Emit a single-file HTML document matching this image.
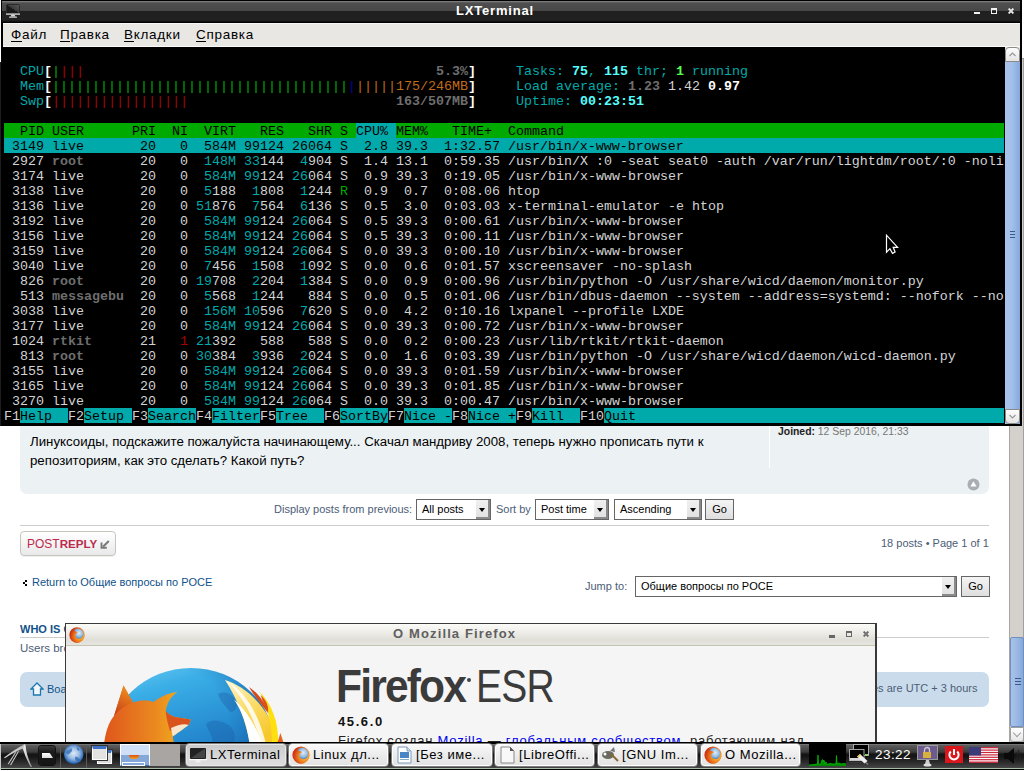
<!DOCTYPE html>
<html><head><meta charset="utf-8">
<style>
*{margin:0;padding:0;box-sizing:border-box}
html,body{width:1024px;height:771px;overflow:hidden;background:#fff;font-family:"Liberation Sans",sans-serif;position:relative}
.abs{position:absolute;white-space:nowrap}
#page{position:absolute;left:0;top:0;width:1009px;height:742px;background:#fff;overflow:hidden}
#ffsb{position:absolute;left:1009px;top:0;width:15px;height:742px;background:#d4d1cc;border-left:1px solid #a9a6a1;border-right:1px solid #a0a0a0}
#ffsb:before{content:"";position:absolute;left:12px;top:0;width:2px;height:58px;background:#fff;border-bottom:1px solid #999}
#ffsb .th{position:absolute;left:0;top:637px;width:14px;height:90px;background:linear-gradient(90deg,#a6c2ea,#9ebbe6 40%,#86a9db);border:1px solid #6f8fbf;border-radius:2px}
#ffsb .th i{position:absolute;left:4px;width:6px;height:1px;background:#3b5a8a}
#ffsb .dn{position:absolute;left:0;top:727px;width:14px;height:15px;background:linear-gradient(#fff,#e6e6e6);border:1px solid #a0a0a0;border-radius:0 0 3px 3px}
#ffsb .dn:after{content:"";position:absolute;left:3px;top:2px;width:5px;height:5px;border-right:1.2px solid #a0a0a0;border-bottom:1.2px solid #a0a0a0;transform:rotate(45deg)}
.panel{position:absolute;background:#ecf1f3;border-radius:7px}
.blue{color:#105289}
.gb{color:#4c5d77}
.sel{position:absolute;height:21px;border:1px solid #666;background:#fff;font-size:11px;color:#000;padding:3px 0 0 5px;white-space:nowrap}
.sel .ar{position:absolute;right:0;top:0;width:14px;height:19px;background:linear-gradient(#f0f0f0,#e2e2e2);border-right:2px solid #8a8a8a;border-bottom:2px solid #8a8a8a}
.sel .ar:after{content:"";position:absolute;left:3px;top:8px;border-left:3.5px solid transparent;border-right:3.5px solid transparent;border-top:4px solid #000}
.go{position:absolute;height:21px;border:1px solid #666;background:linear-gradient(#f4f4f4,#dedede);font-size:11px;color:#000;text-align:center;padding-top:3px}
/* terminal window */
#lxt{position:absolute;left:0;top:0;width:1022px;height:426px;background:#000}
#lxt:before{content:"";position:absolute;left:0;top:0;width:1px;height:62px;background:#fff}
#lxt:after{content:"";position:absolute;left:0;top:62px;width:1px;height:364px;background:#1e1e1e}
#lxt .tb{position:absolute;left:2px;top:1px;width:1018px;height:21px;background:linear-gradient(#8a8a8a 0,#6a6a6a 1px,#4f4f4f 2px,#474747 10px,#1f1f1f 10px,#222 19px,#181818 20px,#0a0a0a 21px)}
#lxt .title{position:absolute;left:456px;top:3px;color:#fff;font-weight:bold;font-size:13px;letter-spacing:.8px}
#lxt .menu{position:absolute;left:3px;top:23px;width:1017px;height:24px;background:#e8e7e4;border-top:1px solid #f7f7f5;border-bottom:1px solid #fbfbfa}
#lxt .menu span{position:absolute;top:3px;font-size:13.5px;letter-spacing:.7px;color:#000}
#lxt .menu u{text-decoration:none;border-bottom:1px solid #000;line-height:11.5px;display:inline-block}
#term{position:absolute;left:4px;top:48px;width:1001px;height:375px;background:#000;font-family:"Liberation Mono",monospace;font-size:13.333px;line-height:15px;color:#d3d3d3;white-space:pre;overflow:hidden}
.tr{height:15px;line-height:17px;white-space:pre;overflow:hidden}
.hd,.hs,.sl,.fk{display:inline-block;height:15px;vertical-align:top}
.c{color:#00aaaa}.bc{color:#55ffff;font-weight:bold}
.g{color:#00aa00}.bg{color:#55ff55;font-weight:bold}
.r{color:#aa0000}.b{color:#0000aa}.y{color:#c26c16}
.bw{color:#fff;font-weight:bold}.bk{color:#6e6e6e;font-weight:bold}
.hd{background:#00aa00;color:#000}.hs{background:#00aaaa;color:#000}
.sl{background:#00aaaa;color:#000}.fk{background:#00aaaa;color:#000}
#tsb{position:absolute;left:1005px;top:47px;width:15px;height:377px;background:linear-gradient(#e9e8e5,#e9e8e5) top/100% 6px no-repeat,linear-gradient(90deg,#a8c4ec,#a2c0ea 45%,#86a9dc)}
.sbtn{position:absolute;left:0;width:15px;height:15px;background:linear-gradient(#fdfdfd,#e4e4e4);border:1px solid #8c8a86}
#cur{position:absolute;left:884px;top:233px}
/* dialog */
#dlg{position:absolute;left:65px;top:623px;width:812px;height:130px;background:#f5f5f5;border:1px solid #3a3a3a;border-right-width:2px}
#dlg .dtb{position:absolute;left:0;top:0;width:809px;height:22px;background:linear-gradient(#fbfbf8,#ecebe6 45%,#dfded7 75%,#e6e5e0);border-bottom:1px solid #c4c5b0}
#dlg .dtitle{position:absolute;left:327px;top:2px;font-size:13px;font-weight:bold;color:#606060;letter-spacing:1.13px}
/* taskbar */
#task{position:absolute;left:0;top:742px;width:1024px;height:29px;background:#fff}
#task .bar{position:absolute;left:0;top:0;width:1024px;height:28px;background:linear-gradient(#000 0,#000 2px,#8a8a8a 2px,#5e5e5e 3px,#3c3c3c 10px,#161616 12px,#141414 14px,#2a2a2a 20px,#454545 25.8px,#a8bea8 25.8px,#a8bea8 27px,#000 27px)}
#task:before{content:"";position:absolute;left:0;top:2px;width:1px;height:26px;background:#c8c8c8;z-index:1}
.tbtn{position:absolute;top:1px;height:24px;border:1px solid #7d7d7d;border-radius:4px;background:linear-gradient(#fafafa,#ececec 50%,#e2e2e2);font-size:13px;color:#000;padding-left:24px;line-height:22px;white-space:nowrap;overflow:hidden;letter-spacing:.55px;box-shadow:inset 0 0 0 1px #fff}
.tbtn.act{background:linear-gradient(#c9c9c9,#d6d6d6 50%,#dedede);box-shadow:inset 0 0 0 1px #e8e8e8}
.tbtn svg{position:absolute;left:3px;top:2px}
</style></head><body>
<div id="page">
  <div class="panel" style="left:20px;top:380px;width:969px;height:114px"></div>
  <div class="abs" style="left:769px;top:400px;width:1px;height:68px;background:#fff"></div>
  <div class="abs" style="left:30px;top:432px;line-height:19px;color:#000;font-size:13.25px">Линуксоиды, подскажите пожалуйста начинающему... Скачал мандриву 2008, теперь нужно прописать пути к<br>репозиториям, как это сделать? Какой путь?</div>
  <div class="abs" style="left:778px;top:426px;font-size:10.4px;color:#777"><b style="color:#222">Joined:</b> 12 Sep 2016, 21:33</div>
  <svg class="abs" style="left:967px;top:478px" width="13" height="13" viewBox="0 0 13 13"><circle cx="6.5" cy="6.5" r="6" fill="#a9aeb3"/><path d="M6.5 3.2 L9.6 8.6 H3.4Z" fill="#fff"/></svg>
  <div class="abs gb" style="left:274px;top:503px;font-size:11px">Display posts from previous:</div>
  <div class="sel" style="left:416px;top:499px;width:75px">All posts<div class="ar"></div></div>
  <div class="abs gb" style="left:496px;top:503px;font-size:11px">Sort by</div>
  <div class="sel" style="left:535px;top:499px;width:74px">Post time<div class="ar"></div></div>
  <div class="sel" style="left:614px;top:499px;width:88px">Ascending<div class="ar"></div></div>
  <div class="go" style="left:705px;top:499px;width:29px">Go</div>
  <div class="abs" style="left:20px;top:525px;width:969px;height:1px;background:#ccc"></div>
  <div class="abs" style="left:20px;top:531px;width:96px;height:25px;border:1px solid #c8c4c0;border-radius:4px;background:linear-gradient(#fff,#e9e9e9);box-shadow:0 1px 0 #f0f0f0"></div>
  <div class="abs" style="left:27px;top:537px;font-size:12px;color:#bc2a4d">POST<b style="font-size:11.6px">REPLY</b></div>
  <svg class="abs" style="left:100px;top:540px" width="10" height="9" viewBox="0 0 10 9"><path d="M8.8 1 L3 6.8" stroke="#7a7a7a" stroke-width="2" fill="none"/><path d="M1.5 2.5 V7.8 H6.8" stroke="#7a7a7a" stroke-width="1.9" fill="none"/></svg>
  <div class="abs" style="left:881px;top:537px;font-size:11px;color:#4c5d77">18 posts • Page 1 of 1</div>
  <div class="abs" style="left:25px;top:580px;width:2px;height:2px;background:#000"></div><div class="abs" style="left:23px;top:582px;width:2px;height:2px;background:#000"></div><div class="abs" style="left:25px;top:584px;width:2px;height:2px;background:#000"></div>
  <div class="abs blue" style="left:32px;top:576px;font-size:11px">Return to Общие вопросы по POCE</div>
  <div class="abs gb" style="left:585px;top:580px;font-size:11px">Jump to:</div>
  <div class="sel" style="left:635px;top:576px;width:322px;height:21px">Общие вопросы по POCE<div class="ar"></div></div>
  <div class="go" style="left:961px;top:576px;width:29px">Go</div>
  <div class="abs blue" style="left:20px;top:623px;font-size:11px;font-weight:bold">WHO IS ONLINE</div>
  <div class="abs" style="left:20px;top:637px;width:969px;height:1px;background:#ccc"></div>
  <div class="abs gb" style="left:20px;top:642px;font-size:11.5px">Users browsing this forum</div>
  <div class="panel" style="left:20px;top:672px;width:969px;height:35px;background:#cadceb"></div>
  <svg class="abs" style="left:30px;top:682px" width="14" height="14" viewBox="0 0 14 14"><path d="M7 1 L13 7 H10.5 V13 H3.5 V7 H1Z" fill="#f4f6f8" stroke="#1a78b4" stroke-width="1.3"/></svg>
  <div class="abs blue" style="left:47px;top:683px;font-size:11px">Board index</div>
  <div class="abs gb" style="left:872px;top:682px;font-size:11px">es are UTC + 3 hours</div>
</div>
<div id="ffsb"><div class="th"><i style="top:40px"></i><i style="top:43px"></i><i style="top:46px"></i></div><div class="dn"></div></div>

<div id="lxt">
  <div class="tb"></div>
  <svg class="abs" style="left:6px;top:4px" width="14" height="14" viewBox="0 0 14 14"><defs><linearGradient id="scr" x1="0" y1="1" x2="1" y2="0"><stop offset=".5" stop-color="#1a1a1a"/><stop offset=".5" stop-color="#3a3a3a"/><stop offset="1" stop-color="#5a5a5a"/></linearGradient></defs><rect x="0.5" y="0.5" width="13" height="9" rx="1" fill="url(#scr)" stroke="#2a2a2a"/><rect x="0" y="9.5" width="14" height="1.2" fill="#e8e8e8"/><path d="M5.5 10.5 H8.5 L9.5 12.5 H4.5Z" fill="#d8d8d8"/><rect x="3" y="12.5" width="8" height="1.3" rx=".6" fill="#cfcfcf"/></svg>
  <div class="title">LXTerminal</div>
  <div class="abs" style="left:974px;top:12px;width:6px;height:2px;background:#f0f0f0"></div>
  <div class="abs" style="left:991px;top:8px;width:6px;height:6px;border:1px solid #f0f0f0;border-top-width:2px"></div>
  <svg class="abs" style="left:1008px;top:8px" width="6" height="6" viewBox="0 0 6 6"><path d="M.6 .6 L5.4 5.4 M5.4 .6 L.6 5.4" stroke="#f0f0f0" stroke-width="1.9"/><rect x="2" y="2" width="2" height="2" fill="#ddd"/></svg>
  <div class="menu">
    <span style="left:8px"><u>Ф</u>айл</span>
    <span style="left:57px"><u>П</u>равка</span>
    <span style="left:121px"><u>В</u>кладки</span>
    <span style="left:193px"><u>С</u>правка</span>
  </div>
  <div id="term"><div class="tr"></div><div class="tr">  <span class="c">CPU</span><span class="bw">[</span><span class="g">|</span><span class="r">|||</span>                                            <span class="bk">5.3%</span><span class="bw">]</span>     <span class="c">Tasks: </span><span class="bc">75</span><span class="c">, </span><span class="bc">115</span><span class="c"> thr; </span><span class="bg">1</span><span class="c"> running</span></div><div class="tr">  <span class="c">Mem</span><span class="bw">[</span><span class="g">|||||||||||||||||||||||||||||||||||||</span><span class="b">|</span><span class="y">|||||</span><span class="y">175/246MB</span><span class="bw">]</span>     <span class="c">Load average: </span><span class="bk">1.23 </span>1.42 <span class="bw">0.97</span></div><div class="tr">  <span class="c">Swp</span><span class="bw">[</span><span class="r">|||||||||||||||||</span>                          <span class="bk">163/507MB</span><span class="bw">]</span>     <span class="c">Uptime: </span><span class="bc">00:23:51</span></div><div class="tr"></div><div class="tr"><span class="hd">  PID USER      PRI  NI  VIRT   RES   SHR S </span><span class="hs">CPU% </span><span class="hd">MEM%   TIME+  Command</span><span class="hd">                                                       </span></div><div class="tr"><span class="sl"> 3149 live       20   0  584M 99124 26064 S  2.8 39.3  1:32.57 /usr/bin/x-www-browser</span><span class="sl">                                        </span></div><div class="tr"> 2927 <span class="bk">root     </span>  20   0 <span class="c"> 148M</span> <span class="c">33</span>144  <span class="c">4</span>904 S  1.4 13.1  0:59.35 /usr/bin/X :0 -seat seat0 -auth /var/run/lightdm/root/:0 -noli</div><div class="tr"> 3174 live       20   0 <span class="c"> 584M</span> <span class="c">99</span>124 <span class="c">26</span>064 S  0.9 39.3  0:19.05 /usr/bin/x-www-browser                                        </div><div class="tr"> 3138 live       20   0  <span class="c">5</span>188  <span class="c">1</span>808  <span class="c">1</span>244 <span class="g">R</span>  0.9  0.7  0:08.06 htop                                                          </div><div class="tr"> 3136 live       20   0 <span class="c">51</span>876  <span class="c">7</span>564  <span class="c">6</span>136 S  0.5  3.0  0:03.03 x-terminal-emulator -e htop                                   </div><div class="tr"> 3192 live       20   0 <span class="c"> 584M</span> <span class="c">99</span>124 <span class="c">26</span>064 S  0.5 39.3  0:00.61 /usr/bin/x-www-browser                                        </div><div class="tr"> 3156 live       20   0 <span class="c"> 584M</span> <span class="c">99</span>124 <span class="c">26</span>064 S  0.5 39.3  0:00.11 /usr/bin/x-www-browser                                        </div><div class="tr"> 3159 live       20   0 <span class="c"> 584M</span> <span class="c">99</span>124 <span class="c">26</span>064 S  0.0 39.3  0:00.10 /usr/bin/x-www-browser                                        </div><div class="tr"> 3040 live       20   0  <span class="c">7</span>456  <span class="c">1</span>508  <span class="c">1</span>092 S  0.0  0.6  0:01.57 xscreensaver -no-splash                                       </div><div class="tr">  826 <span class="bk">root     </span>  20   0 <span class="c">19</span>708  <span class="c">2</span>204  <span class="c">1</span>384 S  0.0  0.9  0:00.96 /usr/bin/python -O /usr/share/wicd/daemon/monitor.py          </div><div class="tr">  513 <span class="bk">messagebu</span>  20   0  <span class="c">5</span>568  <span class="c">1</span>244   884 S  0.0  0.5  0:01.06 /usr/bin/dbus-daemon --system --address=systemd: --nofork --no</div><div class="tr"> 3038 live       20   0 <span class="c"> 156M</span> <span class="c">10</span>596  <span class="c">7</span>620 S  0.0  4.2  0:10.16 lxpanel --profile LXDE                                        </div><div class="tr"> 3177 live       20   0 <span class="c"> 584M</span> <span class="c">99</span>124 <span class="c">26</span>064 S  0.0 39.3  0:00.72 /usr/bin/x-www-browser                                        </div><div class="tr"> 1024 <span class="bk">rtkit    </span>  21 <span class="r">  1</span> <span class="c">21</span>392   588   588 S  0.0  0.2  0:00.23 /usr/lib/rtkit/rtkit-daemon                                   </div><div class="tr">  813 <span class="bk">root     </span>  20   0 <span class="c">30</span>384  <span class="c">3</span>936  <span class="c">2</span>024 S  0.0  1.6  0:03.39 /usr/bin/python -O /usr/share/wicd/daemon/wicd-daemon.py      </div><div class="tr"> 3155 live       20   0 <span class="c"> 584M</span> <span class="c">99</span>124 <span class="c">26</span>064 S  0.0 39.3  0:01.59 /usr/bin/x-www-browser                                        </div><div class="tr"> 3165 live       20   0 <span class="c"> 584M</span> <span class="c">99</span>124 <span class="c">26</span>064 S  0.0 39.3  0:01.85 /usr/bin/x-www-browser                                        </div><div class="tr"> 3270 live       20   0 <span class="c"> 584M</span> <span class="c">99</span>124 <span class="c">26</span>064 S  0.0 39.3  0:00.47 /usr/bin/x-www-browser                                        </div><div class="tr">F1<span class="fk">Help  </span>F2<span class="fk">Setup </span>F3<span class="fk">Search</span>F4<span class="fk">Filter</span>F5<span class="fk">Tree  </span>F6<span class="fk">SortBy</span>F7<span class="fk">Nice -</span>F8<span class="fk">Nice +</span>F9<span class="fk">Kill  </span>F10<span class="fk">Quit  </span><span class="fk">                                            </span></div></div>
  <div id="tsb"><div class="abs" style="left:5px;top:184px;width:5px;height:1px;background:#3b5a86;box-shadow:0 3px 0 #3b5a86,0 6px 0 #3b5a86"></div><div class="sbtn" style="top:0;border-radius:4px 4px 0 0"><svg width="13" height="13" viewBox="0 0 13 13" style="position:absolute;left:0;top:0"><path d="M3.5 8 L6.5 5 L9.5 8" stroke="#999" stroke-width="1.2" fill="none"/></svg></div><div class="sbtn" style="top:362px;border-radius:0 0 4px 4px"><svg width="13" height="13" viewBox="0 0 13 13" style="position:absolute;left:0;top:0"><path d="M3.5 5 L6.5 8 L9.5 5" stroke="#999" stroke-width="1.2" fill="none"/></svg></div></div>
  <svg id="cur" width="16" height="22" viewBox="0 0 16 22"><path d="M2.5 2.2 V19.2 L5.9 15.7 L8.5 20.4 L11.1 19 L9.2 14.3 H13.6Z" fill="#000" stroke="#fff" stroke-width="1.2" stroke-linejoin="miter"/></svg>
</div>

<div id="dlg">
  <div class="dtb">
    <svg class="abs" style="left:3px;top:3px" width="16" height="16" viewBox="0 0 18 18"><defs><radialGradient id="ffo3" cx=".7" cy=".55" r=".75"><stop offset="0" stop-color="#ffd040"/><stop offset=".45" stop-color="#f2861e"/><stop offset="1" stop-color="#c8240e"/></radialGradient><radialGradient id="ffg3" cx=".6" cy=".4" r=".6"><stop offset="0" stop-color="#e2eefa"/><stop offset=".6" stop-color="#8cb6e2"/><stop offset="1" stop-color="#2c5c9c"/></radialGradient></defs><circle cx="9" cy="9" r="8.6" fill="url(#ffo3)"/><circle cx="10" cy="8" r="6.2" fill="url(#ffg3)"/><path d="M1 9 C1 5 3 2.5 6 1.5 C5.5 3 5.8 4.2 6.8 5 C8.5 4.8 9.8 5.6 9.6 6.8 C8.4 7 7.2 8 7.3 9.8 C7.6 12.3 10 13.6 12.6 13 C14.6 12.5 16.3 11 17.4 9 C17.4 13.6 13.6 17.6 9 17.6 C4.6 17.6 1 13.8 1 9Z" fill="url(#ffo3)"/></svg>
    <div class="dtitle">O Mozilla Firefox</div>
    <div class="abs" style="left:763px;top:11px;width:6px;height:3px;background:#666"></div>
    <div class="abs" style="left:780px;top:7px;width:6px;height:6px;border:1px solid #666;border-top-width:2px"></div>
    <svg class="abs" style="left:797px;top:7px" width="6" height="6" viewBox="0 0 6 6"><path d="M.6 .6 L5.4 5.4 M5.4 .6 L.6 5.4" stroke="#666" stroke-width="1.9"/><rect x="2" y="2" width="2" height="2" fill="#777"/></svg>
  </div>
  <svg class="abs" style="left:30px;top:40px" width="200" height="80" viewBox="96 664 200 80">
    <defs>
      <linearGradient id="gl" x1="0" y1="0" x2=".3" y2="1"><stop offset="0" stop-color="#6ccbf3"/><stop offset=".2" stop-color="#3aaee6"/><stop offset=".55" stop-color="#2488cf"/><stop offset="1" stop-color="#185aa2"/></linearGradient>
      <radialGradient id="gd" cx=".38" cy=".35" r=".62"><stop offset="0" stop-color="#185aa2" stop-opacity="0"/><stop offset=".55" stop-color="#185aa2" stop-opacity="0"/><stop offset="1" stop-color="#0f3f80" stop-opacity=".55"/></radialGradient>
      <linearGradient id="fx" x1="0" y1="0" x2="1" y2="0"><stop offset="0" stop-color="#df561c"/><stop offset=".6" stop-color="#eb8a20"/><stop offset="1" stop-color="#f3b81c"/></linearGradient>
      <linearGradient id="er" x1="0" y1="1" x2=".3" y2="0"><stop offset="0" stop-color="#c43a18"/><stop offset="1" stop-color="#ee8a1e"/></linearGradient>
      <linearGradient id="fl" x1="0" y1="0" x2=".5" y2="1"><stop offset="0" stop-color="#fff6d0"/><stop offset=".5" stop-color="#fbdc6a"/><stop offset="1" stop-color="#f6c82a"/></linearGradient>
    </defs>
    <ellipse cx="191" cy="748" rx="84" ry="80" fill="url(#gl)"/>
    <ellipse cx="191" cy="748" rx="84" ry="80" fill="url(#gd)"/>
    <path d="M218 694 C224 690 232 694 236 700 C238 706 236 712 230 712 C226 706 220 702 218 694Z M206 724 C212 718 222 720 230 726 C236 732 236 740 232 744 L212 744 C214 736 208 732 206 724Z" fill="#1a5aa0" opacity=".35"/>
    <path d="M225 680 C250 688 272 712 279 744 L250 744 C246 722 238 700 225 680Z" fill="url(#fl)"/>
    <path d="M228 682 C245 692 258 712 266 744 L261 744 C254 718 244 698 228 682Z" fill="#fff" opacity=".85"/>
    <path d="M234 699.4 C246 710 256 725 262 744 L249.6 744 C247 725 242 711 234 699.4Z" fill="#fff"/>
    <path d="M260 692 C272 705 279 722 278 744 L272 744 C272 725 268 708 260 692Z" fill="#ffdf10"/>
    <path d="M249 687 C258 693 265 702 268 713 C262 705 255 697 249 687Z" fill="#d64a1a"/>
    <path d="M260.7 695 C266 700 269 706 268 713 C265 706 262 700 260.7 695Z" fill="#d8501c"/>
    <path d="M280.4 733 L284 744 L277 744Z" fill="#e2661a"/>
    <path d="M104 744 C106 730 109 722 114 716 L123.5 685.5 L133 702.6 C140 700 148 700 153.5 702 C160 697 168 693 177.4 691.9 C171 696 167 703 165.7 711 C168 714 171 716 175 717 L190.7 719.6 C190 722 189 724 188.6 725 C182 730 176 734 172.7 736.6 L174 744Z" fill="url(#fx)"/>
    <path d="M114 716 L123.5 685.5 L133 702.6 C126 705 119 710 114 716Z" fill="url(#er)"/>
    <path d="M165.7 711 C168 714 171 716 175 717 L190.7 719.6 C190 722 189 724 188.6 725 C182 727 176 729 170 731 C168 724 166 717 165.7 711Z" fill="#d9531c"/>
    <path d="M171 728 C178 725 184 723 188.6 725 C182 730 176 734 172.7 736.6Z" fill="#f8e6cc"/>
  </svg>
  <div class="abs" style="left:270px;top:34px;font-size:47px;color:#3b3b3b;font-weight:bold;letter-spacing:-2px;transform:scaleX(.905);transform-origin:0 0">Firefox</div>
  <div class="abs" style="left:401px;top:54px;width:4px;height:4px;border-radius:50%;background:#444"></div>
  <div class="abs" style="left:410px;top:34px;font-size:47px;color:#3b3b3b;transform:scaleX(.83);transform-origin:0 0;letter-spacing:-1px">ESR</div>
  <div class="abs" style="left:272px;top:90px;font-size:13px;font-weight:bold;color:#111;letter-spacing:1.6px">45.6.0</div>
  <div class="abs" style="left:272px;top:109px;font-size:13px;color:#222;letter-spacing:.75px">Firefox создан <span style="color:#00e;text-decoration:underline">Mozilla</span> — <span style="color:#00e;text-decoration:underline">глобальным сообществом</span>, работающим над</div>
</div>

<div id="task">
  <div class="bar"></div>
    <svg class="abs" style="left:0;top:0" width="34" height="27" viewBox="0 742 34 27"><defs><linearGradient id="lx" x1="0" y1="0" x2="1" y2="1"><stop offset="0" stop-color="#f8f8f8"/><stop offset=".5" stop-color="#c8c8c8"/><stop offset="1" stop-color="#8a8a8a"/></linearGradient></defs><g fill="url(#lx)"><path d="M23.6 744.8 Q24.8 743.6 25.5 744.8 Q26.6 757 32.2 767 L30.8 767 Q25.4 758 22.8 748.5Z"/><path d="M24.8 744.2 Q15 749 4 757.6 L4.9 758.3 Q15 751.8 23.2 748.6Z"/><path d="M15 752.6 L7.6 764 L8.7 764.3 L16.5 752Z"/><path d="M17.8 751.6 L10 765 L11.1 765.3 L19.2 751Z"/></g></svg>
  <div class="abs" style="left:39px;top:4px;width:16px;height:19px;border-radius:3px;background:linear-gradient(#3a3a3a,#1c1c1c 30%,#141414);box-shadow:0 0 0 1px #111"></div>
  <div class="abs" style="left:42px;top:11px;width:11px;height:5px;background:linear-gradient(#fff,#ddd);clip-path:polygon(0 0,70% 0,100% 100%,0 100%)"></div>
  <div class="abs" style="left:60px;top:3px;width:1px;height:23px;background:#5a5a5a"></div><div class="abs" style="left:86px;top:3px;width:1px;height:23px;background:#5a5a5a"></div>
  <svg class="abs" style="left:63px;top:2px" width="22" height="22" viewBox="0 0 22 22"><defs><radialGradient id="gb" cx=".5" cy=".45" r=".55"><stop offset="0" stop-color="#dfeaf6"/><stop offset=".5" stop-color="#9dbde4"/><stop offset=".85" stop-color="#3f78bf"/><stop offset="1" stop-color="#1a4f9a"/></radialGradient></defs><circle cx="10.7" cy="10.3" r="9.8" fill="url(#gb)"/><path d="M3 8 C5 5 7 6 8 4 C10 6 9 8 7 9 C6 11 4 11 3 8Z M12 13 C14 12 16 14 17 16 C15 18 13 17 12 15Z M14 3 C16 4 17 6 16 7 C14 6 13 5 14 3Z" fill="#2a66b0" opacity=".7"/></svg>
  <div class="abs" style="left:97px;top:8px;width:15px;height:14px;background:#dcdcda;border:1px solid #fff;border-top:3px solid #3d6fc4;box-shadow:0 0 0 1px #333"></div>
  <div class="abs" style="left:92px;top:4px;width:15px;height:14px;background:#e2e2e0;border:1px solid #fff;border-top:3px solid #3d6fc4;box-shadow:0 0 0 1px #333"></div>
  <div class="abs" style="left:120px;top:2px;width:30px;height:22px;background:linear-gradient(#cfe0f6 0,#cfe0f6 50%,#83a8d9 50%);border:1px solid #fff;border-bottom-color:#3b6bb5"></div>
  <div class="abs" style="left:129px;top:13px;width:10px;height:4px;border-radius:0 0 5px 5px;background:linear-gradient(#e05010,#f0a020)"></div>
  <div class="abs" style="left:122px;top:20px;width:23px;height:4px;border:1px solid #fff;background:#83a8d9"></div>
  <div class="abs" style="left:150px;top:2px;width:30px;height:22px;background:#a9a5a2"></div>
  <div class="tbtn act" style="left:185px;width:102px"><svg width="18" height="18" viewBox="0 0 18 18"><rect x="1" y="2" width="16" height="11" rx="1" fill="#222"/><path d="M2 12 L15 3 H16 V12Z" fill="#444"/><rect x="0" y="13" width="18" height="1.3" fill="#fafafa"/><path d="M7 14 H11 L12 16.5 H6Z" fill="#eee"/></svg>LXTerminal</div>
  <div class="tbtn" style="left:288px;width:101px"><svg width="18" height="18" viewBox="0 0 18 18"><defs><radialGradient id="ffo" cx=".7" cy=".55" r=".75"><stop offset="0" stop-color="#ffd040"/><stop offset=".45" stop-color="#f2861e"/><stop offset="1" stop-color="#c8240e"/></radialGradient><radialGradient id="ffg" cx=".6" cy=".4" r=".6"><stop offset="0" stop-color="#e2eefa"/><stop offset=".6" stop-color="#8cb6e2"/><stop offset="1" stop-color="#2c5c9c"/></radialGradient></defs><circle cx="9" cy="9" r="8.6" fill="url(#ffo)"/><circle cx="10" cy="8" r="6.2" fill="url(#ffg)"/><path d="M1 9 C1 5 3 2.5 6 1.5 C5.5 3 5.8 4.2 6.8 5 C8.5 4.8 9.8 5.6 9.6 6.8 C8.4 7 7.2 8 7.3 9.8 C7.6 12.3 10 13.6 12.6 13 C14.6 12.5 16.3 11 17.4 9 C17.4 13.6 13.6 17.6 9 17.6 C4.6 17.6 1 13.8 1 9Z" fill="url(#ffo)"/></svg>Linux дл...</div>
  <div class="tbtn" style="left:391px;width:102px"><svg width="18" height="18" viewBox="0 0 18 18"><path d="M3 1 H12 L16 5 V17 H3Z" fill="#fff" stroke="#7a9bbf"/><rect x="5" y="6" width="9" height="6" fill="#4b86c4"/><rect x="5" y="13" width="9" height="1" fill="#8ab"/><path d="M12 1 V5 H16" fill="#cde" stroke="#7a9bbf"/></svg>[Без име...</div>
  <div class="tbtn" style="left:494px;width:101px"><svg width="18" height="18" viewBox="0 0 18 18"><path d="M3 1 H12 L16 5 V17 H3Z" fill="#f8f8f8" stroke="#888"/><path d="M12 1 V5 H16Z" fill="#555"/></svg>[LibreOffi...</div>
  <div class="tbtn" style="left:597px;width:101px"><svg width="20" height="18" viewBox="0 0 20 18"><ellipse cx="7" cy="9" rx="6" ry="4" fill="#6a6a60"/><circle cx="4" cy="8" r="1.5" fill="#fff"/><path d="M10 8 L17 15" stroke="#8a6a30" stroke-width="2"/><path d="M9 5 L13 1 L14 6Z" fill="#777"/></svg>[GNU Im...</div>
  <div class="tbtn" style="left:700px;width:101px"><svg width="18" height="18" viewBox="0 0 18 18"><defs><radialGradient id="ffo2" cx=".7" cy=".55" r=".75"><stop offset="0" stop-color="#ffd040"/><stop offset=".45" stop-color="#f2861e"/><stop offset="1" stop-color="#c8240e"/></radialGradient><radialGradient id="ffg2" cx=".6" cy=".4" r=".6"><stop offset="0" stop-color="#e2eefa"/><stop offset=".6" stop-color="#8cb6e2"/><stop offset="1" stop-color="#2c5c9c"/></radialGradient></defs><circle cx="9" cy="9" r="8.6" fill="url(#ffo2)"/><circle cx="10" cy="8" r="6.2" fill="url(#ffg2)"/><path d="M1 9 C1 5 3 2.5 6 1.5 C5.5 3 5.8 4.2 6.8 5 C8.5 4.8 9.8 5.6 9.6 6.8 C8.4 7 7.2 8 7.3 9.8 C7.6 12.3 10 13.6 12.6 13 C14.6 12.5 16.3 11 17.4 9 C17.4 13.6 13.6 17.6 9 17.6 C4.6 17.6 1 13.8 1 9Z" fill="url(#ffo2)"/></svg>O Mozilla...</div>
  <svg class="abs" style="left:809px;top:2px" width="37" height="22" viewBox="0 0 37 22"><rect width="37" height="22" fill="#000"/><path d="M0 22 V21 L5 20.5 L8.5 20 L9 11 L9.5 20.5 L12 20 L12.5 17 L13.5 15.5 L14 18 L14.5 16 L15.5 17 L16 20 L17 18 L18 20.5 L21 19.5 L24 20 L27 19.8 L27.5 11.5 L28 20 L30 19 L32 20 L35 19.5 L37 20 V22Z" fill="#008a00"/><path d="M0 21 L5 20.5 L8.5 20 L9 11 L9.5 20.5 L12 20 L12.5 17 L13.5 15.5 L14 18 L14.5 16 L15.5 17 L16 20 L17 18 L18 20.5 L21 19.5 L24 20 L27 19.8 L27.5 11.5 L28 20 L30 19 L32 20 L35 19.5 L37 20" stroke="#00c000" stroke-width=".8" fill="none"/></svg>
  <svg class="abs" style="left:846px;top:1px" width="26" height="25" viewBox="846 743 26 25"><rect x="853.5" y="744.5" width="15" height="11" fill="#000" stroke="#a8a8a8"/><rect x="865" y="754" width="3" height="2" fill="#8fd06a"/><rect x="849.5" y="749.5" width="14.5" height="11" fill="#050505" stroke="#a0a0a0"/><rect x="850" y="758" width="13.5" height="2.5" fill="#d8d8d8"/><rect x="850" y="762" width="12" height="1" fill="#3a3a3a"/><path d="M857 756.5 L860 754 L867.5 761 L864.5 763.5Z" fill="#f0f0f0"/><path d="M857 756.5 L860 754 L861 755 L858 757.5Z" fill="#e8c040"/><path d="M866 762.5 L868 764.5" stroke="#888" stroke-width="1.2"/></svg>
  <div class="abs" style="left:875px;top:5px;font-size:13.5px;color:#fff;letter-spacing:.45px">23:22</div>
  <svg class="abs" style="left:917px;top:2px" width="21" height="23" viewBox="0 0 21 23"><rect x="0.5" y="1.5" width="20" height="14" fill="#6c5b8c" stroke="#9a9a9a"/><rect x="6" y="8" width="8" height="6" fill="#d8b040"/><path d="M7.5 8 V6 A2.5 2.5 0 0 1 12.5 6 V8" stroke="#ccc" stroke-width="1.3" fill="none"/><path d="M9 16 H12 L13 20 H8Z" fill="#ccc"/><ellipse cx="10.5" cy="21" rx="4" ry="1.5" fill="#ddd"/></svg>
  <svg class="abs" style="left:945px;top:4px" width="18" height="17" viewBox="0 0 18 17"><rect width="18" height="17" fill="#d8161b"/><path d="M5.8 5.5 A4.6 4.6 0 1 0 12.2 5.5" stroke="#fff" stroke-width="2" fill="none"/><path d="M9 3 V9" stroke="#fff" stroke-width="2"/></svg>
  <svg class="abs" style="left:969px;top:5px" width="29" height="16" viewBox="0 0 29 16"><rect width="29" height="16" fill="#fff"/><g fill="#c8283c"><rect y="0" width="29" height="1.3"/><rect y="2.5" width="29" height="1.2"/><rect y="4.9" width="29" height="1.2"/><rect y="7.3" width="29" height="1.2"/><rect y="9.7" width="29" height="1.2"/><rect y="12.1" width="29" height="1.2"/><rect y="14.5" width="29" height="1.5"/></g><rect width="12" height="8.5" fill="#3b3b7a"/></svg>
  <svg class="abs" style="left:1003px;top:6px" width="21" height="16" viewBox="0 0 21 16"><path d="M1 5 H5 L11 0 V16 L5 11 H1Z" fill="#0a0a0a"/><path d="M13 4 Q16 8 13 12 M15 2 Q19 8 15 14" stroke="#222" stroke-width="1.2" fill="none"/></svg>

</div>
</body></html>
